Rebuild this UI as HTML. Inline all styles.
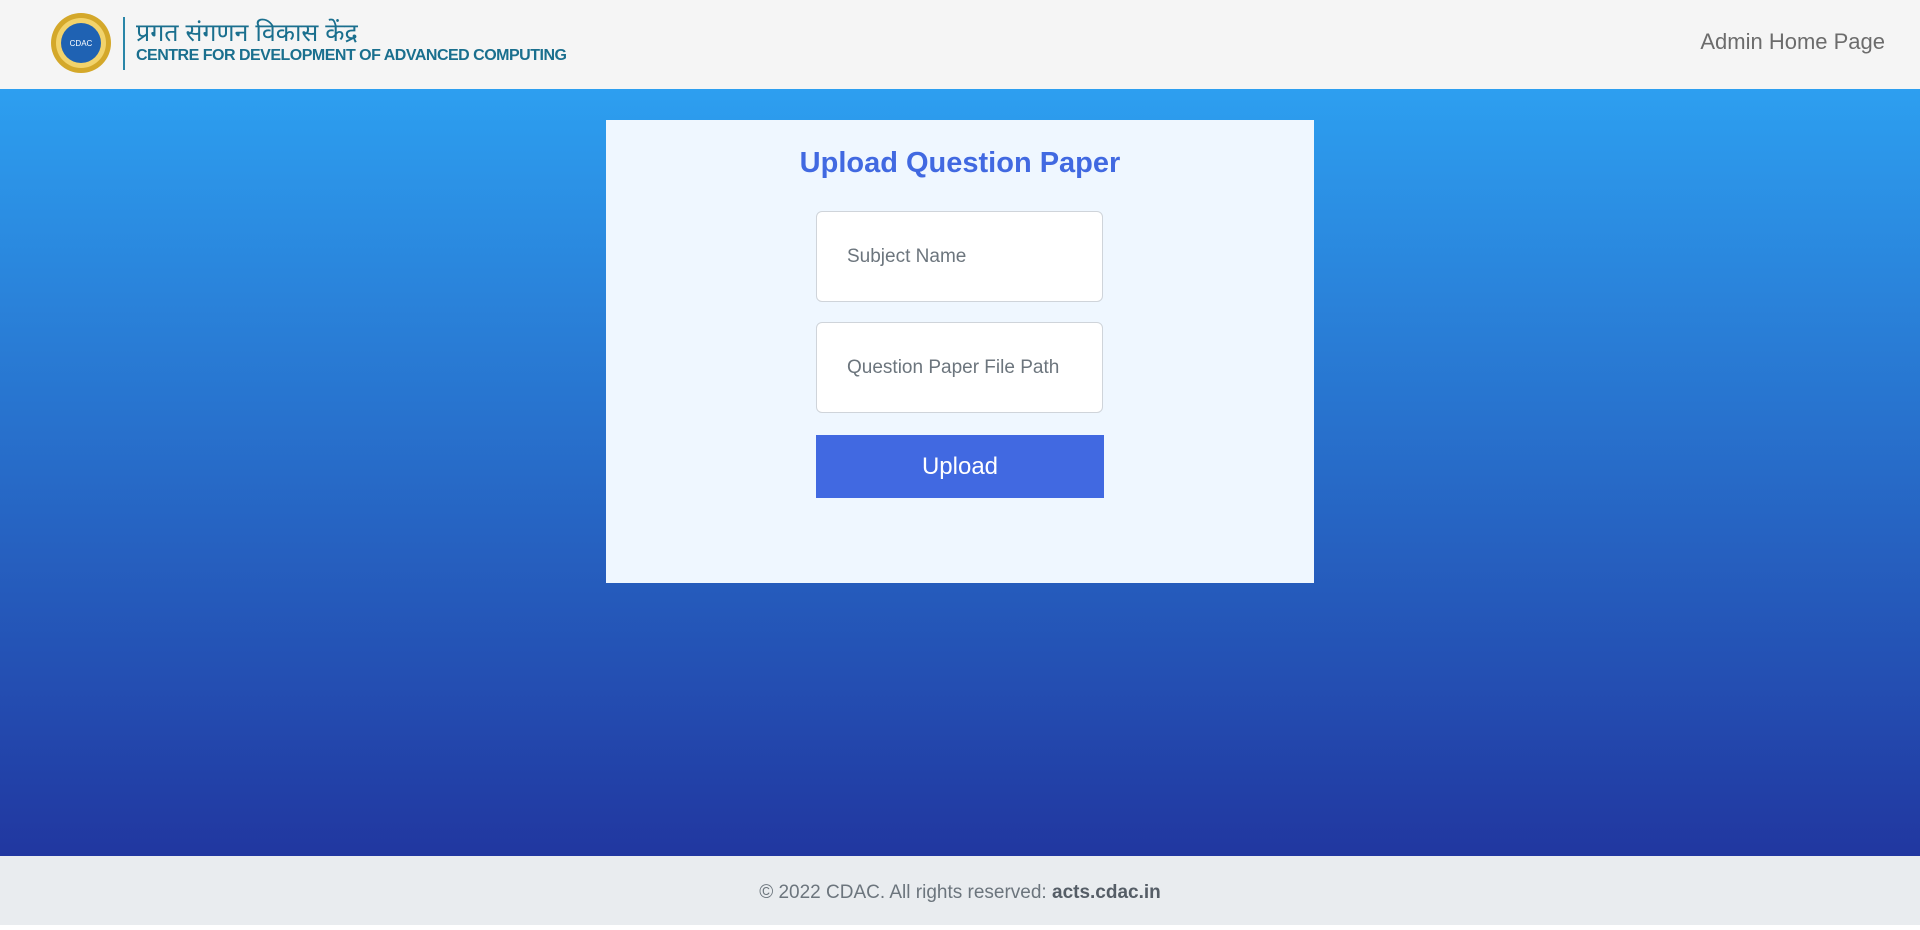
<!DOCTYPE html>
<html><head><meta charset="utf-8"><style>
*{margin:0;padding:0;box-sizing:border-box}
body{width:1920px;height:925px;overflow:hidden;font-family:"Liberation Sans",sans-serif;position:relative}
.hdr{position:absolute;left:0;top:0;width:1920px;height:89px;background:#f5f5f5}
.main{position:absolute;left:0;top:89px;width:1920px;height:767px;background:linear-gradient(#2d9ff0,#2137a0)}
.ftr{position:absolute;left:0;top:856px;width:1920px;height:69px;background:#e9ecef;text-align:center;line-height:74px;font-size:19px;color:#6c757d}
.ftr b{color:#555d66}
.card{position:absolute;left:606px;top:120px;width:708px;height:463px;background:#eff7ff}
h1{position:absolute;left:0;width:708px;top:27px;text-align:center;font-size:29px;color:#4169e1;font-weight:bold}
.inp{position:absolute;left:816px;width:287px;height:91px;background:#fff;border:1px solid #cfd4da;border-radius:6px;font-size:19px;color:#6c757d;padding-left:30px;line-height:89px}
.btn{position:absolute;left:816px;top:435px;width:288px;height:63px;background:#4169e1;color:#fff;font-size:24px;text-align:center;line-height:63px}
</style></head><body>
<div class="hdr">
<svg style="position:absolute;left:49px;top:12px" width="64" height="62"><circle cx="32" cy="31" r="30" fill="#d4a82a"/><circle cx="32" cy="31" r="25" fill="#f2d36b"/><circle cx="32" cy="31" r="20" fill="#1f62b3"/><text x="32" y="34" font-size="8" fill="#fff" text-anchor="middle" font-family="Liberation Sans">CDAC</text></svg>
<div style="position:absolute;left:123px;top:17px;width:2px;height:53px;background:#2a86a8"></div>
<div style="position:absolute;left:136px;top:15px;font-size:25px;color:#1a6f8e;font-family:'Liberation Sans','Noto Sans CJK SC',sans-serif">प्रगत संगणन विकास केंद्र</div>
<div style="position:absolute;left:136px;top:47px;font-size:16px;color:#1a6f8e;font-weight:bold;letter-spacing:-0.5px">CENTRE FOR DEVELOPMENT OF ADVANCED COMPUTING</div>
<div style="position:absolute;right:35px;top:29px;font-size:22px;color:#6c6c6c">Admin Home Page</div>
</div>
<div class="main"></div>
<div class="card"><h1>Upload Question Paper</h1></div>
<div class="inp" style="top:211px">Subject Name</div>
<div class="inp" style="top:322px">Question Paper File Path</div>
<div class="btn">Upload</div>
<div class="ftr">© 2022 CDAC. All rights reserved: <b>acts.cdac.in</b></div>
</body></html>
